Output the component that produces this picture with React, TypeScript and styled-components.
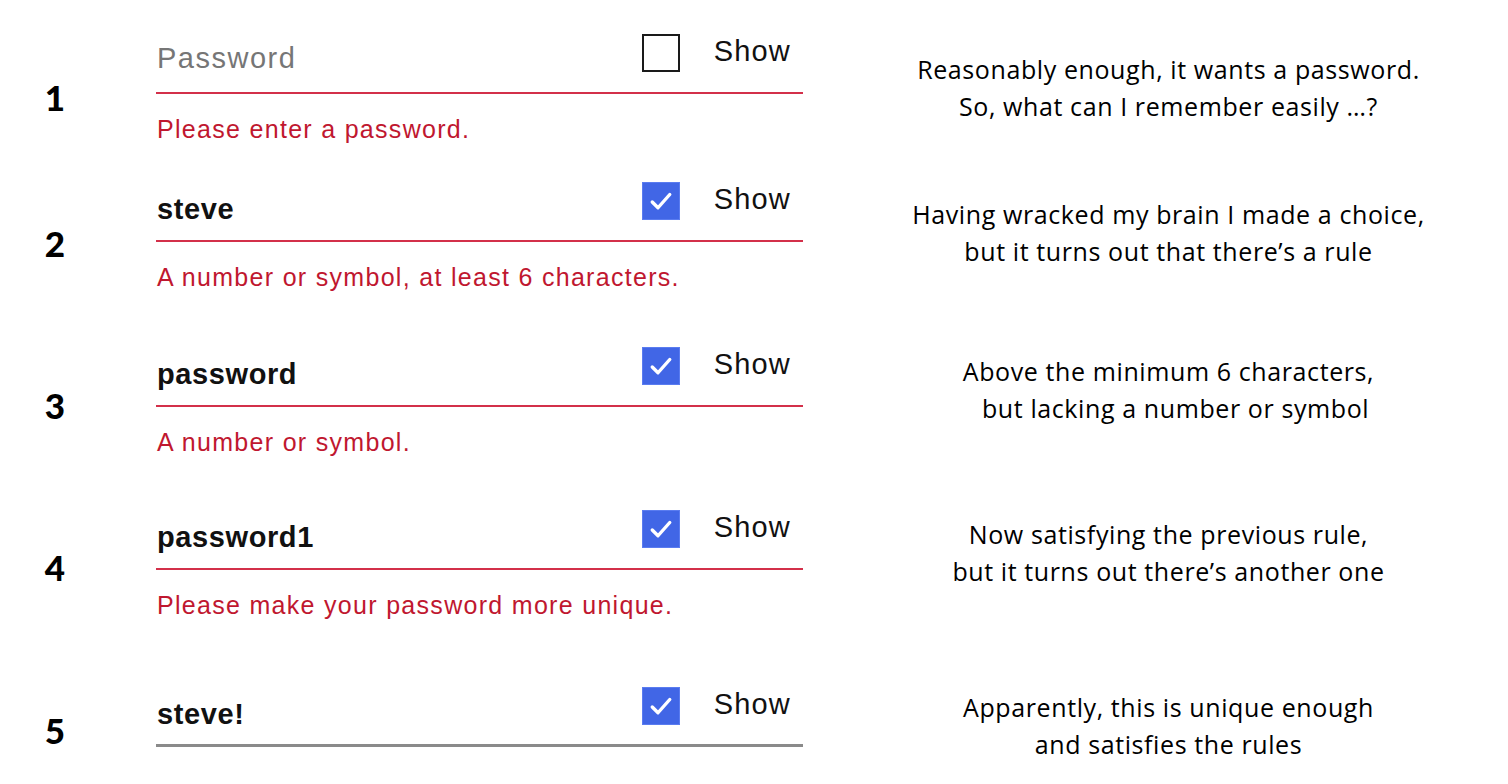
import styled, { createGlobalStyle } from "styled-components";

const GlobalStyle = createGlobalStyle`
  html, body {
    margin: 0;
    padding: 0;
    background: #ffffff;
  }
  body {
    font-family: "Liberation Sans", Arial, sans-serif;
  }
`;

type Step = {
  n: number;
  value: string;
  checked: boolean;
  error?: string;
  note: [string, string];
  height: number;
  numberTop: number;
  noteTop: number;
};

const steps: Step[] = [
  {
    n: 1,
    value: "",
    checked: false,
    error: "Please enter a password.",
    note: ["Reasonably enough, it wants a password.", "So, what can I remember easily …?"],
    height: 148,
    numberTop: 46,
    noteTop: 17,
  },
  {
    n: 2,
    value: "steve",
    checked: true,
    error: "A number or symbol, at least 6 characters.",
    note: ["Having wracked my brain I made a choice,", "but it turns out that there’s a rule"],
    height: 165,
    numberTop: 44,
    noteTop: 14,
  },
  {
    n: 3,
    value: "password",
    checked: true,
    error: "A number or symbol.",
    note: ["Above the minimum 6 characters,", "  but lacking a number or symbol"],
    height: 163,
    numberTop: 41,
    noteTop: 6,
  },
  {
    n: 4,
    value: "password1",
    checked: true,
    error: "Please make your password more unique.",
    note: ["Now satisfying the previous rule,", "but it turns out there’s another one"],
    height: 177,
    numberTop: 40,
    noteTop: 6,
  },
  {
    n: 5,
    value: "steve!",
    checked: true,
    note: ["Apparently, this is unique enough", "and satisfies the rules"],
    height: 97,
    numberTop: 26,
    noteTop: 2,
  },
];

export default function App() {
  return (
    <>
      <GlobalStyle />
      <Page>
        {steps.map((s) => (
          <Row key={s.n} $height={s.height}>
            <StepNumber $top={s.numberTop}>{s.n}</StepNumber>
            <Field>
              <FieldHead $error={!!s.error}>
                <Value $empty={!s.value}>{s.value || "Password"}</Value>
                <Toggle>
                  <Box $checked={s.checked}>
                    {s.checked && (
                      <svg width="30" height="30" viewBox="0 0 24 24" fill="none">
                        <path
                          d="M5 12.8l4.6 4.6L19 6.8"
                          stroke="#ffffff"
                          strokeWidth="2.7"
                          strokeLinecap="round"
                          strokeLinejoin="round"
                        />
                      </svg>
                    )}
                  </Box>
                  <ShowLabel>Show</ShowLabel>
                </Toggle>
              </FieldHead>
              {s.error && <ErrorText>{s.error}</ErrorText>}
            </Field>
            <Note $top={s.noteTop}>
              <span>{s.note[0]}</span>
              <span>{s.note[1]}</span>
            </Note>
          </Row>
        ))}
      </Page>
    </>
  );
}

const Page = styled.div`
  width: 1508px;
  height: 784px;
  padding-top: 34px;
  box-sizing: border-box;
  overflow: hidden;
`;

const Row = styled.div<{ $height: number }>`
  height: ${(p) => p.$height}px;
  display: grid;
  grid-template-columns: 110px 647px 1fr;
  column-gap: 46px;
  align-items: start;
`;

const StepNumber = styled.div<{ $top: number }>`
  margin-top: ${(p) => p.$top}px;
  text-align: center;
  font-family: Lato, "Open Sans", sans-serif;
  font-weight: 900;
  font-size: 35px;
  line-height: 34px;
  color: #000000;
`;

const Field = styled.div`
  display: flex;
  flex-direction: column;
`;

const FieldHead = styled.div<{ $error: boolean }>`
  height: 60px;
  box-sizing: border-box;
  display: flex;
  justify-content: space-between;
  align-items: flex-start;
  border-bottom: ${(p) => (p.$error ? "2px solid #d3304a" : "3px solid #8a8a8a")};
`;

const Value = styled.div<{ $empty: boolean }>`
  padding-top: ${(p) => (p.$empty ? "7px" : "10px")};
  padding-left: 1px;
  font-size: 29px;
  line-height: 34px;
  font-weight: ${(p) => (p.$empty ? 400 : 700)};
  color: ${(p) => (p.$empty ? "#767676" : "#111111")};
  letter-spacing: ${(p) => (p.$empty ? "1.5px" : "0.6px")};
`;

const Toggle = styled.div`
  display: flex;
  align-items: flex-start;
  gap: 34px;
  padding-right: 12px;
`;

const Box = styled.div<{ $checked: boolean }>`
  width: 38px;
  height: 38px;
  box-sizing: border-box;
  display: flex;
  align-items: center;
  justify-content: center;
  background: ${(p) => (p.$checked ? "#4166e6" : "#ffffff")};
  border: ${(p) => (p.$checked ? "1px solid #5a7cf0" : "2px solid #1a1a1a")};
`;

const ShowLabel = styled.span`
  font-size: 29px;
  line-height: 34px;
  color: #111111;
  letter-spacing: 1.2px;
`;

const ErrorText = styled.div`
  margin-top: 20px;
  padding-left: 1px;
  font-size: 25px;
  line-height: 30px;
  color: #c0172f;
  letter-spacing: 1.3px;
`;

const Note = styled.div<{ $top: number }>`
  margin-top: ${(p) => p.$top}px;
  padding-right: 20px;
  display: flex;
  flex-direction: column;
  align-items: center;
  font-family: "Open Sans", Lato, sans-serif;
  font-size: 25px;
  line-height: 37px;
  letter-spacing: 0.6px;
  color: #000000;
  white-space: pre;
`;
